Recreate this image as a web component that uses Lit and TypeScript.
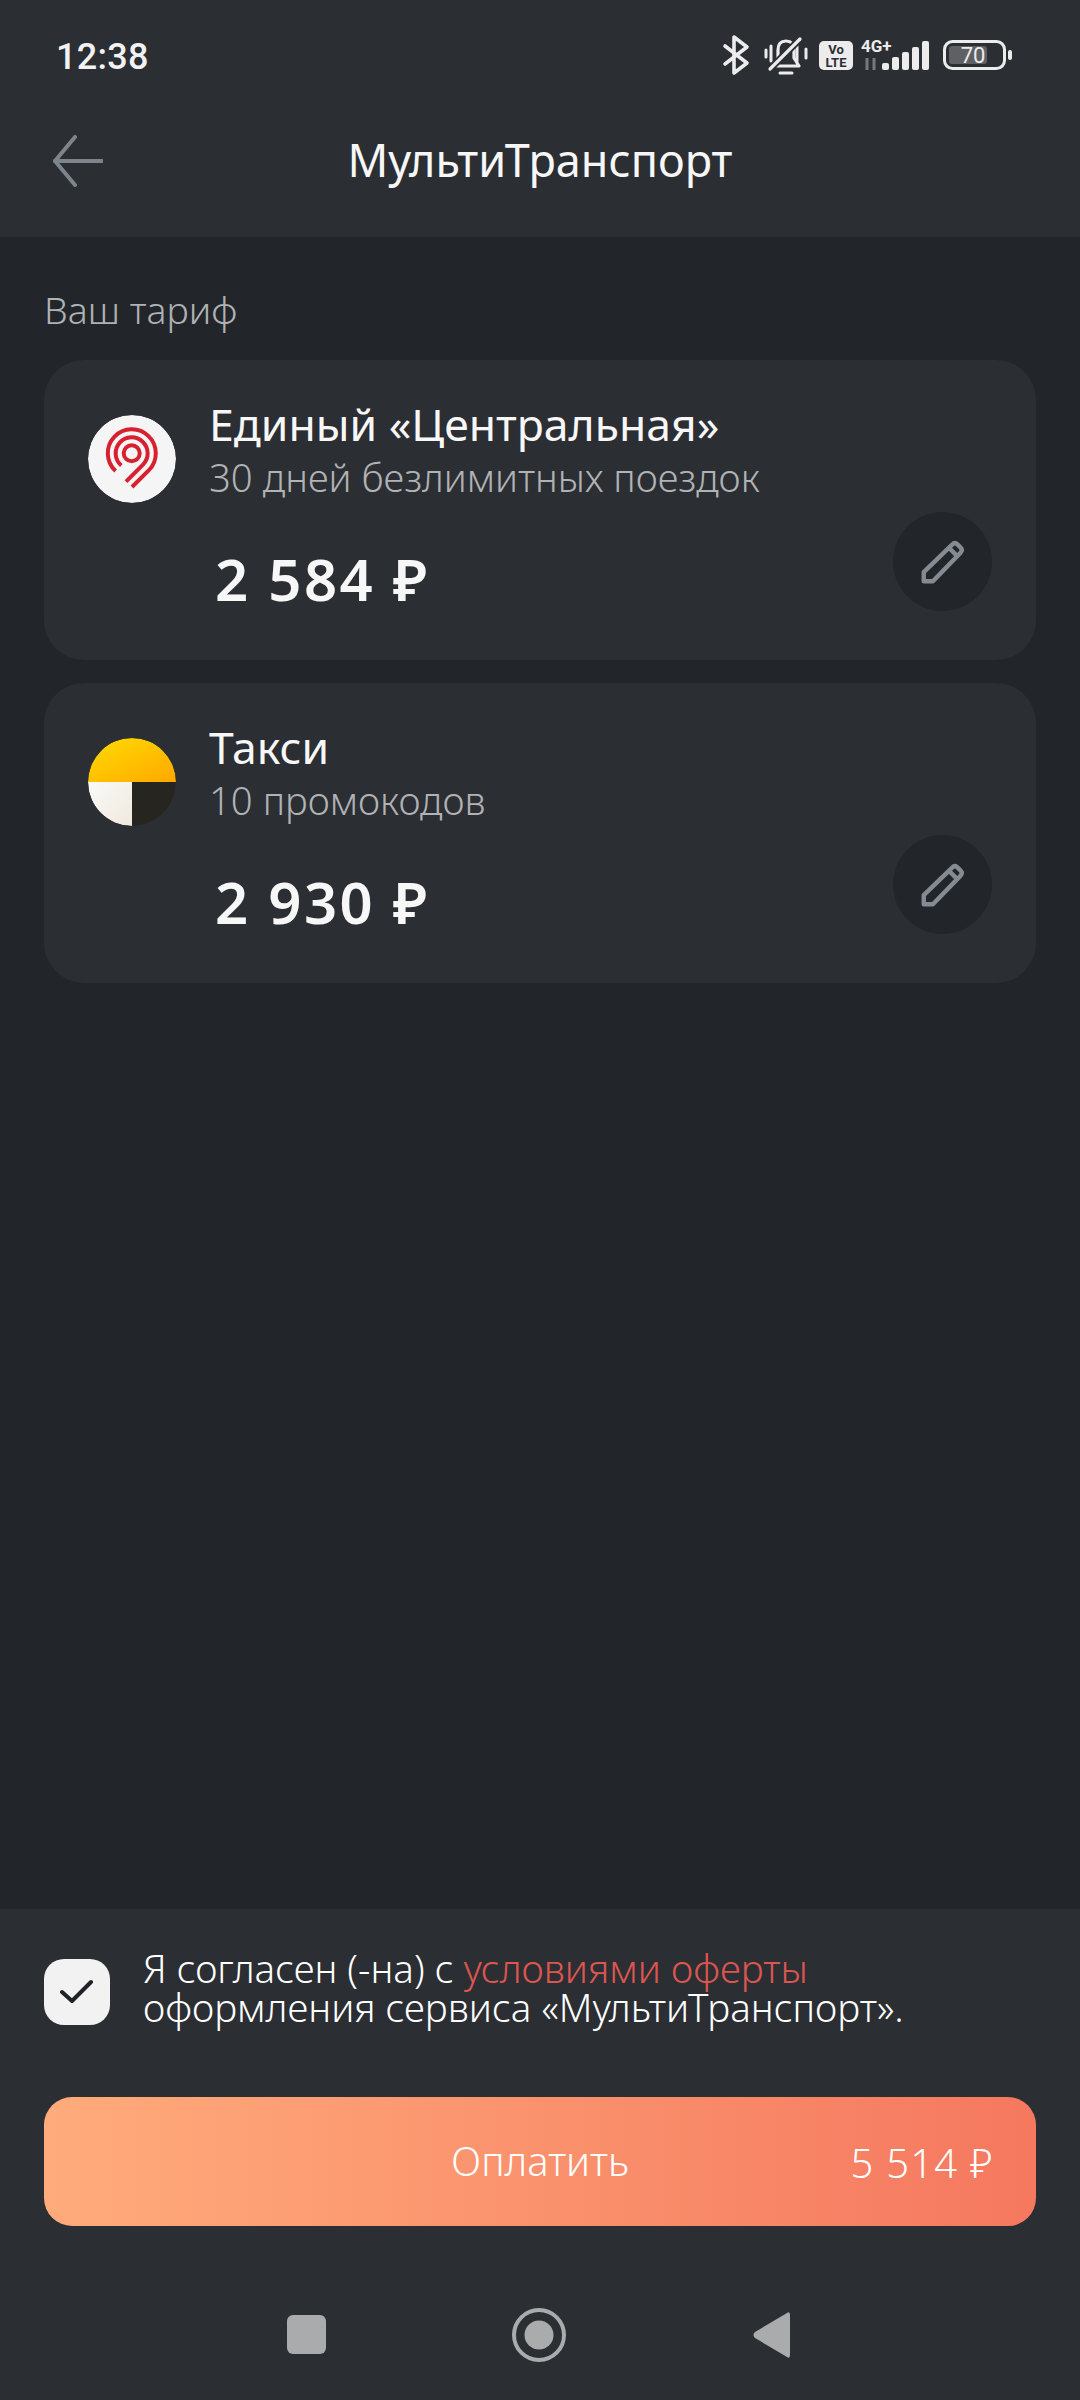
import { LitElement, html, css } from "lit";
import { customElement } from "lit/decorators.js";

const pencil = html`<svg width="44" height="44" viewBox="0 0 48 48" fill="none" stroke="#858b93" stroke-width="4.8" stroke-linejoin="round" stroke-linecap="round">
  <path d="M3 45 L3 35 L34 5 Q37 2 40 5 L43 8 Q46 11 43 14 L13 45 Z"/>
  <path d="M31 9 L39 17" />
</svg>`;

@customElement("app-root")
export class AppRoot extends LitElement {
  static styles = css`
    :host { display: block; width: 1080px; height: 2400px; background: #22262a; font-family: "Noto Sans", "Open Sans", sans-serif; color: #f5f5f5; overflow: hidden; }
    .page { height: 2400px; display: flex; flex-direction: column; }
    header { height: 237px; background: #2b2e33; display: flex; flex-direction: column; flex: none; }
    .status { height: 110px; display: flex; align-items: center; justify-content: space-between; padding: 0 40px 0 56px; }
    .status svg { display: block; }
    .time { font-family: Roboto, sans-serif; font-size: 36px; font-weight: 500; letter-spacing: 0.3px; color: #f2f2f2; margin-top: 4px; }
    .bar { flex: 1; position: relative; display: flex; align-items: center; justify-content: center; padding-bottom: 28px; }
    .back { position: absolute; left: 53px; top: 25px; }
    .title { font-size: 45px; font-weight: 400; color: #f7f7f7; }
    main { flex: 1; padding: 50px 44px 0; display: flex; flex-direction: column; }
    .section { font-size: 37.5px; font-weight: 300; color: #b0b2b4; line-height: 46px; margin-bottom: 27px; }
    .card { height: 300px; box-sizing: border-box; background: #2b2e33; border-radius: 40px; margin-bottom: 23px; padding: 36px 44px 0 44px; position: relative; display: flex; gap: 33px; }
    .logo { flex: none; width: 88px; height: 88px; margin-top: 19px; border-radius: 50%; overflow: hidden; }
    .info { display: flex; flex-direction: column; }
    .name { font-size: 44.5px; line-height: 56px; color: #f7f7f7; }
    .sub { font-size: 38.3px; font-weight: 300; line-height: 51px; color: #b0b2b4; }
    .price { font-size: 58px; font-weight: 600; letter-spacing: 2.5px; line-height: 76px; margin: 38px 0 0 6px; color: #f7f7f7; }
    .edit { position: absolute; right: 44px; top: 152px; width: 99px; height: 99px; border-radius: 50%; background: #22262a; display: flex; align-items: center; justify-content: center; }
    footer { height: 491px; flex: none; background: #2b2e33; padding: 50px 44px 0; box-sizing: border-box; display: flex; flex-direction: column; }
    .agree { display: flex; gap: 33px; align-items: flex-start; height: 138px; }
    .check { width: 66px; height: 66px; flex: none; border-radius: 20px; background: #f2f2f2; display: flex; align-items: center; justify-content: center; }
    .terms { font-size: 38.6px; font-weight: 300; line-height: 39px; color: #ffffff; margin-top: -10px; white-space: nowrap; }
    .terms span { color: #dc5650; font-weight: 300; }
    .pay { height: 129px; flex: none; border-radius: 28px; background: linear-gradient(90deg, #ffab7b, #f5785f); position: relative; display: flex; align-items: center; justify-content: center; font-size: 40px; font-weight: 300; color: #fff; padding-bottom: 2px; box-sizing: border-box; }
    .sum { position: absolute; right: 42px; top: 50%; transform: translateY(-50%); letter-spacing: 1.2px; }
    nav { flex: 1; display: flex; align-items: center; padding-top: 44px; }
    nav svg { display: block; }
  `;

  private card(logo: unknown, name: string, sub: string, price: string) {
    return html`<div class="card">
      <div class="logo">${logo}</div>
      <div class="info">
        <div class="name">${name}</div>
        <div class="sub">${sub}</div>
        <div class="price">${price}</div>
      </div>
      <div class="edit">${pencil}</div>
    </div>`;
  }

  render() {
    const metro = html`<svg width="88" height="88" viewBox="0 0 88 88" fill="none">
      <circle cx="44" cy="44" r="44" fill="#f5f5f6"/>
      <g stroke="#d8202f" stroke-width="4" fill="none">
        <circle cx="43.7" cy="38.3" r="8"/>
        <path d="M33.3 50.5 A16 16 0 1 1 55 49.6 L38 66.6"/>
        <path d="M27.6 56 A24 24 0 1 1 60.7 55.3 L44 72"/>
      </g>
    </svg>`;
    const taxi = html`<svg width="88" height="88" viewBox="0 0 88 88">
      <defs>
        <linearGradient id="y" x1="0" y1="0" x2="1" y2="1"><stop offset="0" stop-color="#ffdc00"/><stop offset="1" stop-color="#ffa800"/></linearGradient>
        <linearGradient id="w" x1="0" y1="0" x2="1" y2="1"><stop offset="0" stop-color="#fafafa"/><stop offset="1" stop-color="#f0e8dc"/></linearGradient>
      </defs>
      <path d="M0 44 A44 44 0 0 1 88 44 Z" fill="url(#y)"/>
      <path d="M0 44 H44 V88 A44 44 0 0 1 0 44 Z" fill="url(#w)"/>
      <path d="M44 44 H88 A44 44 0 0 1 44 88 Z" fill="#27251f"/>
    </svg>`;
    return html`<div class="page">
      <header>
        <div class="status">
          <div class="time">12:38</div>
          <svg width="360" height="70" viewBox="0 0 360 70">
            <g fill="none" stroke="#ececec" stroke-width="3.6" stroke-linejoin="round" stroke-linecap="round">
              <path d="M45 26 L67 43 L54 53 V17 L67 27 L45 44"/>
              <path d="M86 30 v7 M91 26 v15 M117 26 v15 M126 29 v9" stroke-width="3"/>
              <path d="M94 46 L98 38 V30 Q98 21 106 21 Q114 21 114 30 V38 L119 46 Z" stroke-width="3.2"/>
              <path d="M90 49 L120 19" stroke="#2b2e33" stroke-width="7"/>
              <path d="M90 49 L120 19" stroke-width="3.2"/>
              <path d="M100 53 H112" stroke-width="3"/>
            </g>
            <rect x="139" y="21" width="34" height="29" rx="5" fill="#ececec"/>
            <text x="156" y="34" font-family="Roboto" font-size="13" font-weight="700" text-anchor="middle" fill="#2b2e33">Vo</text>
            <text x="156" y="47" font-family="Roboto" font-size="13" font-weight="700" text-anchor="middle" fill="#2b2e33">LTE</text>
            <text x="181" y="32" font-family="Roboto" font-size="17" font-weight="700" fill="#ececec">4G+</text>
            <path d="M187 38 v12 M194 38 v12" stroke="#77797c" stroke-width="3"/>
            <g fill="#ececec">
              <rect x="202" y="43" width="7" height="7" rx="2"/>
              <rect x="212" y="37" width="7" height="13" rx="2"/>
              <rect x="222" y="32" width="7" height="18" rx="2"/>
              <rect x="232" y="27" width="7" height="23" rx="2"/>
              <rect x="242" y="21" width="7" height="29" rx="2"/>
            </g>
            <rect x="264.5" y="21.5" width="60" height="27" rx="8" fill="none" stroke="#ececec" stroke-width="3"/>
            <rect x="269" y="26" width="38" height="18" rx="3" fill="#5e6064"/>
            <text x="293" y="43" font-family="Roboto" font-size="22" text-anchor="middle" fill="#ececec">70</text>
            <rect x="328" y="30" width="4" height="10" rx="2" fill="#ececec"/>
          </svg>
        </div>
        <div class="bar">
          <svg class="back" width="50" height="52" viewBox="0 0 50 52" fill="none" stroke="#7d848c" stroke-width="4" stroke-linecap="round" stroke-linejoin="round">
            <path d="M22 2 L2 26 L22 50"/><path d="M2 26 H49"/>
          </svg>
          <div class="title">МультиТранспорт</div>
        </div>
      </header>
      <main>
        <div class="section">Ваш тариф</div>
        ${this.card(metro, "Единый «Центральная»", "30 дней безлимитных поездок", "2 584 ₽")}
        ${this.card(taxi, "Такси", "10 промокодов", "2 930 ₽")}
      </main>
      <footer>
        <div class="agree">
          <div class="check">
            <svg width="34" height="26" viewBox="0 0 34 26" fill="none" stroke="#1f2226" stroke-width="4" stroke-linecap="round" stroke-linejoin="round"><path d="M2 13 L12 22 L31 3"/></svg>
          </div>
          <div class="terms">Я согласен (-на) с <span>условиями оферты</span><br />оформления сервиса «МультиТранспорт».</div>
        </div>
        <div class="pay">Оплатить<div class="sum">5 514 ₽</div></div>
        <nav>
          <svg width="992" height="60" viewBox="0 0 992 60" fill="#aaabad">
            <rect x="243" y="10" width="39" height="39" rx="6"/>
            <circle cx="495" cy="30" r="25" fill="none" stroke="#aaabad" stroke-width="4"/>
            <circle cx="495" cy="30" r="14.5"/>
            <path d="M743 8 Q746 6 746 10 V50 Q746 54 743 52 L711 33 Q708 30 711 27 Z"/>
          </svg>
        </nav>
      </footer>
    </div>`;
  }
}
